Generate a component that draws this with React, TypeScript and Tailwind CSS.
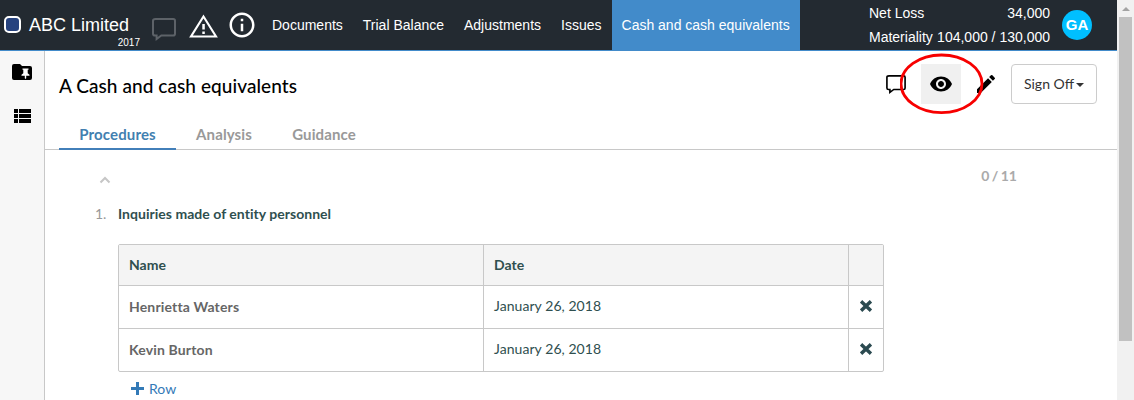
import React from "react";
import { MdEdit, MdOutlineInfo, MdViewList, MdVisibility } from "react-icons/md";

const tabs = ["Documents", "Trial Balance", "Adjustments", "Issues"];
const rows = [
  { name: "Henrietta Waters", date: "January 26, 2018" },
  { name: "Kevin Burton", date: "January 26, 2018" },
];

function Bubble({ className }: { className: string }) {
  return (
    <svg viewBox="0 0 24 23" className={className} fill="none" stroke="currentColor" strokeWidth="2">
      <path d="M3.5 1h17.7Q23 1 23 2.800v12.900q0 1.800-1.800 1.800H9.300L4.600 21V17.500H3Q1 17.500 1 15.700V2.800Q1 1 3.500 1Z" />
    </svg>
  );
}

function Warning() {
  return (
    <svg viewBox="0 0 29 24" className="h-6 w-[29px]">
      <path d="M14.500 2.500 27 22.500H2Z" fill="none" stroke="#fff" strokeWidth="2.100" />
      <path d="M13.300 10h2.500v5.500h-2.500zM13.300 17.500h2.500v2.500h-2.500z" fill="#fff" />
    </svg>
  );
}

function FolderPin() {
  return (
    <svg viewBox="0 0 20 16" className="h-4 w-5">
      <path d="M2 0h6l2 2h8q2 0 2 2v10q0 2-2 2H2q-2 0-2-2V2Q0 0 2 0Z" fill="#000" />
      <path d="M10.500 4.500h6v1.200h-.8v3.500l1.800 1.600v1h-3.300v2.400l-.7.800-.7-.8v-2.400H9.500v-1l1.800-1.600V5.700h-.8Z" fill="#fff" />
    </svg>
  );
}

function Cross() {
  return (
    <svg viewBox="0 0 12 12" className="h-3 w-3">
      <path d="M2.300 2.500 9.700 9.500M9.700 2.500 2.300 9.500" stroke="#2b4a50" strokeWidth="3.500" strokeLinecap="square" />
    </svg>
  );
}

export default function App() {
  return (
    <div className="relative flex h-[400px] w-[1134px] overflow-hidden bg-white font-['Lato',sans-serif] text-sm">
      <div className="flex w-[1117px] flex-col">
        <header className="flex h-[51px] shrink-0 border-b border-[#428bca] bg-[#232a31] font-['Liberation_Sans',sans-serif] text-white">
          <div className="flex w-[262px] shrink-0">
            <span className="mt-4 ml-1 h-[17px] w-[17px] shrink-0 rounded-[5px] border-2 border-white bg-[#27437f]" />
            <div className="ml-2 flex w-[111px] shrink-0 flex-col pt-[13px]">
              <span className="text-lg leading-6 whitespace-nowrap">ABC Limited</span>
              <span className="text-right text-[10px] leading-3">2017</span>
            </div>
            <Bubble className="mt-[18px] ml-3 h-[23px] w-6 shrink-0 text-[#5d6268]" />
            <div className="mt-[14px] ml-[13px] shrink-0"><Warning /></div>
            <MdOutlineInfo className="mt-[10px] ml-[9px] shrink-0" size={30} />
          </div>
          <nav className="flex">
            {tabs.map((t) => (
              <a key={t} className="px-[10px] text-sm leading-[50px] whitespace-nowrap">{t}</a>
            ))}
            <a className="w-[188px] bg-[#428bca] px-[10px] text-sm leading-[50px] whitespace-nowrap">Cash and cash equivalents</a>
          </nav>
          <div className="ml-auto flex w-[181px] flex-col pt-[1px] text-sm leading-6">
            <div className="flex justify-between"><span>Net Loss</span><span>34,000</span></div>
            <div className="flex justify-between whitespace-nowrap"><span>Materiality</span><span>104,000 / 130,000</span></div>
          </div>
          <div className="mt-[10px] mr-[25px] ml-3 flex h-[30px] w-[30px] shrink-0 items-center justify-center rounded-full bg-[#00bfff] text-[15px] font-bold">GA</div>
        </header>
        <div className="flex min-h-0 flex-1">
          <aside className="flex w-[45px] shrink-0 flex-col border-r border-[#c8c8c8] bg-[#f7f7f7]">
            <div className="mt-[13px] ml-3 h-4"><FolderPin /></div>
            <svg viewBox="0 0 17 14" className="mt-[29px] ml-[14px] h-[14px] w-[17px]">
              <path d="M0 0h4v4H0zM5 0h12v4H5zM0 5h4v4H0zM5 5h12v4H5zM0 10h4v4H0zM5 10h12v4H5z" fill="#000" />
            </svg>
          </aside>
          <main className="flex min-w-0 flex-1 flex-col">
            <div className="flex h-[70px] shrink-0 pl-[14px]">
              <h1 className="pt-[23px] text-[19px] leading-6 font-medium tracking-[0.07px] whitespace-nowrap text-black">A Cash and cash equivalents</h1>
              <div className="ml-auto flex pt-[13px] pr-5 text-black">
                <Bubble className="mt-[11px] mr-[15px] h-[19px] w-5" />
                <span className="flex h-10 w-10 items-center justify-center bg-[#f0f0f0]"><MdVisibility size={24} /></span>
                <MdEdit size={24} className="mt-2 mr-[13px] ml-[13px]" />
                <button className="flex h-10 w-[86px] items-center justify-center rounded border border-[#ccc] text-[#333]">
                  Sign Off
                  <span className="mt-px ml-[2px] border-x-4 border-t-4 border-x-transparent border-t-[#333]" />
                </button>
              </div>
            </div>
            <div className="flex h-[29px] shrink-0 border-b border-[#c8c8c8] pl-[14px] text-[15px] leading-[27px] font-bold text-[#999]">
              <span className="h-[29px] w-[117px] border-b-2 border-[#427fb9] text-center tracking-[0.15px] text-[#427fb0]">Procedures</span>
              <span className="w-24 text-center tracking-[0.1px]">Analysis</span>
              <span className="w-[104px] text-center tracking-[0.1px]">Guidance</span>
            </div>
            <div className="flex h-[54px] shrink-0 justify-between pt-4 pr-[100px] pl-[54px] font-bold text-[#aaa]">
              <svg viewBox="0 0 12 8" className="mt-[10px] h-2 w-3"><path d="m1.500 6.500 4.500-4.500 4.500 4.500" fill="none" stroke="#c6c6c6" strokeWidth="2" /></svg>
              <span className="[word-spacing:-1px]">0 / 11</span>
            </div>
            <div className="flex h-10 shrink-0 pl-[50px] text-sm leading-5">
              <span className="w-[23px] text-[#999]">1.</span>
              <span className="font-bold tracking-[0.03px] text-[#2f4f4f]">Inquiries made of entity personnel</span>
            </div>
            <div className="ml-[73px] grid w-[766px] shrink-0 grid-cols-[364px_365px_35px] overflow-hidden rounded-[2px] border border-[#c8c8c8] text-[#2f4f4f]">
              <div className="h-10 bg-[#f4f4f4] pl-[10px] leading-10 font-bold">Name</div>
              <div className="border-l border-[#c8c8c8] bg-[#f4f4f4] pl-[10px] leading-10 font-bold">Date</div>
              <div className="border-l border-[#c8c8c8] bg-[#f4f4f4]" />
              {rows.map((r) => (
                <React.Fragment key={r.name}>
                  <div className="h-[43px] border-t border-[#c8c8c8] pl-[10px] leading-[42px] font-bold tracking-[0.15px] text-[#666]">{r.name}</div>
                  <div className="border-t border-l border-[#c8c8c8] pl-[10px] leading-10 tracking-[0.06px]">{r.date}</div>
                  <div className="border-t border-l border-[#c8c8c8] pt-[14px] pl-[11px]"><Cross /></div>
                </React.Fragment>
              ))}
            </div>
            <div className="flex pt-[7px] pl-[86px] leading-5 text-[#337ab7]">
              <svg viewBox="0 0 13 13" className="mt-[3px] mr-[5px] h-[13px] w-[13px]"><path d="M5 0h3v5h5v3H8v5H5V8H0V5h5Z" fill="currentColor" /></svg>
              Row
            </div>
          </main>
        </div>
      </div>
      <div className="flex w-[17px] flex-col bg-[#f1f1f1]">
        <div className="flex h-[17px] justify-center pt-[7px]">
          <svg viewBox="0 0 8 4" className="h-1 w-2"><path d="M0 4 4 0 8 4Z" fill="#a3a3a3" /></svg>
        </div>
        <div className="ml-[2px] h-[324px] w-[13px] bg-[#c1c1c1]" />
      </div>
      <svg viewBox="0 0 84 62" className="absolute top-[53px] left-[900px] h-[62px] w-[84px]">
        <ellipse cx="41.500" cy="30.800" rx="40.500" ry="28.800" fill="none" stroke="#f70000" strokeWidth="2.800" />
      </svg>
    </div>
  );
}
